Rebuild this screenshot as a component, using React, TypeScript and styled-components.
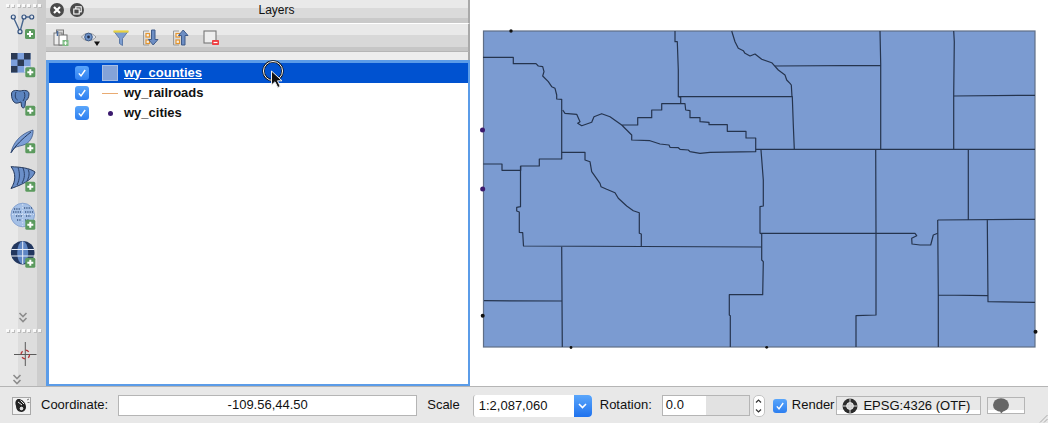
import styled, { createGlobalStyle } from "styled-components";
import { ReactNode } from "react";

const GlobalStyle = createGlobalStyle`
  html, body { margin: 0; padding: 0; background: #e8e8e8; overflow: hidden; }
  body { font-family: "Liberation Sans", Arial, sans-serif; }
`;

// county boundaries, traced in page coordinates
const counties = [
  "M483 57.3H513.3V63.7H536L538.3 66L542.7 66.7L544 71.7L542.7 76L548.3 81.7L551.7 86.7L555 88.3L556.7 95V99L561.7 99.3V159H539.3V166H520.7V170.3H502V164H483.3",
  "M561.7 152.3H585V160L590 161.7L591.7 171.7L600 183.3L601 186.7L606.7 189.3L615 192.7L618.3 198.3L626.7 206L633.3 210.7L639.3 212.7V233.3L641.3 234V246.7",
  "M520.5 166V206.7L516.7 207.3V211L519.3 212V232.3L522.7 232.7L523.5 246L761.7 247",
  "M561.7 246.7L562.3 347M484 300.7L562.3 301",
  "M761 150L763.3 180V206L760 206.7V233.3L761.7 234V260L763.3 261.7L762.7 294.7H729.3V315L730.3 315.7V347",
  "M562.7 110L565 113.3L576.7 114.3L580 121.7L577.7 123.3L581.7 125.7L591.7 122.3L594 116.7L601.7 113.7L610 116.7L621.7 125L631.7 135V140L650 140.7L660 144L669 145L670 147.3L678.3 147.7L680 149.3L688.3 150L690 151.7L700 153.3L710 152.3L755.7 151.7V138H746V131.3H727.3V124.7H709V122.3L700 121.7V117.7H690V110.7L685.7 110L685 103.7H661.7V110H651.7V117.7H637.7V125H621.7",
  "M675 31V41.7H677.3L678.3 70V96.7L680.7 97.3V103.7M678.3 96.7H792.3L793.3 125L794.3 149.3",
  "M731.7 31L735 41.7L738.3 48.3L743.3 50.7L745 53.3L750 56L755 54L761.7 59.3L771.7 62.7L778.3 70L785 75L786.7 80L790 83.3L791.3 85L792 96.7",
  "M775 66L880.5 65.3M880 31L880.7 63.3V149.3M953.7 31L954.3 41.7L953.7 96V149.3M953.7 96L1035 95.3M756 149.3H1035",
  "M875.7 150L876 233.3V315L856 315.7V347M968.3 150V219.3M937.7 220L1035 219.3M937.7 220L938.3 295V347M987.3 220L988 301.7L1035 302.3M938.3 295L987.7 295.7",
  "M760 233.3H915L916.7 235.7L911.7 238.3L912 244L920 245H930.7L933.3 235L937.7 233.3",
];

const mapDots = [
  { x: 511, y: 31, r: 1.7, c: "#111" },
  { x: 482.5, y: 130, r: 2.5, c: "#3b1a6e" },
  { x: 482.7, y: 189, r: 2.5, c: "#3b1a6e" },
  { x: 482.7, y: 315.7, r: 2, c: "#111" },
  { x: 571, y: 347.5, r: 1.4, c: "#111" },
  { x: 766.7, y: 347.3, r: 1.4, c: "#111" },
  { x: 1035.5, y: 331.7, r: 2, c: "#111" },
];

const layers = [
  { name: "wy_counties", kind: "fill", selected: true },
  { name: "wy_railroads", kind: "line", selected: false },
  { name: "wy_cities", kind: "point", selected: false },
];

function Badge({ x, y }: { x: number; y: number }) {
  return (
    <g>
      <rect x={x - 5} y={y - 5} width="10" height="10" rx="1.5" fill="#5b9a5e" />
      <path d={`M${x - 3} ${y}H${x + 3}M${x} ${y - 3}V${y + 3}`} stroke="#fff" strokeWidth="2" />
    </g>
  );
}

function SideIcon({ top, children }: { top: number; children: ReactNode }) {
  return (
    <SideSvg viewBox={`0 ${top} 46 39`}>{children}</SideSvg>
  );
}

function Grip() {
  return (
    <GripRow>
      {Array.from({ length: 7 }).map((_, i) => (
        <GripDot key={i} />
      ))}
    </GripRow>
  );
}

function Chevrons() {
  return (
    <svg width="10" height="11" viewBox="0 0 10 11">
      <path d="M1.5 1L5 4.5L8.5 1M1.5 6L5 9.5L8.5 6" fill="none" stroke="#8d8d8d" strokeWidth="1.6" />
    </svg>
  );
}

function LeftToolbar() {
  return (
    <LeftBar>
      <Grip />
      <SideIcon top={5}>
        <path d="M13.3 17L20 31.7L24 17H31.7" fill="none" stroke="#48668f" strokeWidth="1.4" />
        {[[13.3, 17], [20, 31.7], [24, 17], [31.7, 17]].map(([x, y]) => (
          <circle key={x} cx={x} cy={y} r="2" fill="#dfe6f0" stroke="#34527e" strokeWidth="1.2" />
        ))}
        <Badge x={30} y={34} />
      </SideIcon>
      <SideIcon top={44}>
        <rect x="11" y="53" width="19.6" height="19.6" fill="#7c9fdc" />
        <path d="M11 53h6.5v6.5h-6.5zM24 53h6.5v6.5h-6.5zM17.5 59.5h6.5v6.5h-6.5zM11 66h6.5v6.5h-6.5z" fill="#2b3a55" />
        <rect x="24" y="66" width="6.5" height="6.5" fill="#c3d3ee" />
        <Badge x={30.3} y={72.3} />
      </SideIcon>
      <SideIcon top={83}>
        <path d="M11.5 94C11.5 90 16 90 20 91C24 90 29 90 29 94C29 98 27 100 25.5 101L25 106C24.5 108.5 22 108.5 21.5 106L21 102C18 103 16 104 14 102C12 100 11.5 97 11.5 94Z" fill="#5c84bf" stroke="#24385c" strokeWidth="1" />
        <path d="M16 92C14.5 96 15.5 99 17.5 100M24 92C25.5 95 25 98 23 101" fill="none" stroke="#24385c" strokeWidth="0.9" />
        <Badge x={30.3} y={110.7} />
      </SideIcon>
      <SideIcon top={122}>
        <path d="M11 152.7C13 143 20 134 33 130C33.5 135 31 141 26 144C22 146 17 146 14.5 148Z" fill="#7c9fd6" stroke="#3a5685" strokeWidth="0.8" />
        <path d="M11 152.7C16 145 22 139 31 132" fill="none" stroke="#24385c" strokeWidth="1" />
        <Badge x={30.3} y={148.3} />
      </SideIcon>
      <SideIcon top={161}>
        <path d="M11 166.7C20 167 30 168 35 172C33 178 27 183 11 188.5C16 181 16 173 11 166.7Z" fill="#6b8fc9" stroke="#22375c" strokeWidth="1" />
        <path d="M18 167.5C20 173 20 179 17 185M23 168C25 173 25 178 22 183M28 169.5C30 173 29 177 27 181" fill="none" stroke="#22375c" strokeWidth="0.9" />
        <Badge x={30.3} y={186.7} />
      </SideIcon>
      <SideIcon top={200}>
        <circle cx="22.7" cy="215" r="11.8" fill="#a5c0e6" stroke="#7c9bcb" strokeWidth="0.8" />
        <path d="M14 209H20M24 208H32M13 212H21M25 212H33M16 216H22M26 216H31M17 220H21M25 220H29" stroke="#3f5a86" strokeWidth="1.6" strokeDasharray="1.2 1.1" />
        <path d="M12 214.5H34M22.7 204V226" stroke="#e6eef9" strokeWidth="0.7" strokeDasharray="1.5 1.5" />
        <Badge x={30.3} y={224.7} />
      </SideIcon>
      <SideIcon top={239}>
        <circle cx="22.7" cy="252.7" r="11.8" fill="#22375f" />
        <ellipse cx="22.7" cy="252.7" rx="5.5" ry="11.5" fill="#5f86c4" />
        <path d="M11.5 249.5H34M11.5 256H34M22.7 241.5V264" stroke="#e8eef8" strokeWidth="1" />
        <Badge x={30.3} y={262.7} />
      </SideIcon>
      <Spacer />
      <ChevronSlot>
        <Chevrons />
      </ChevronSlot>
      <Grip />
      <Crosshair viewBox="0 0 46 26">
        <path d="M25.3 0V24M14 12.5H36.5" stroke="#5a5a5a" strokeWidth="1" />
        <circle cx="25.3" cy="12.5" r="4.3" fill="none" stroke="#b5383a" strokeWidth="1.3" strokeDasharray="3.5 3.2" />
      </Crosshair>
      <BottomChevron>
        <Chevrons />
      </BottomChevron>
    </LeftBar>
  );
}

function DockTools() {
  return (
    <DockToolbar>
      <ToolButton>
        <svg width="20" height="20" viewBox="0 0 20 20">
          <rect x="5.5" y="2" width="7" height="12" fill="#d8d8d8" stroke="#7b7b7b" />
          <rect x="3" y="5" width="8" height="12" fill="#eee" stroke="#7b7b7b" />
          <rect x="8" y="7" width="8" height="10" fill="#fff" stroke="#6e6e6e" />
          <rect x="11.5" y="12" width="6" height="6" fill="#7dbb83" />
          <path d="M14.5 13.2V17M12.7 15H16.3" stroke="#fff" strokeWidth="1.2" />
          <path d="M6.5 3V8" stroke="#4b6d9f" strokeWidth="1.6" />
        </svg>
      </ToolButton>
      <ToolButton>
        <svg width="20" height="20" viewBox="0 0 20 20">
          <path d="M0.5 9C4 4 11 4 15 9C11 14 4 14 0.5 9Z" fill="#dfe3ea" stroke="#9a9a9a" />
          <circle cx="7.5" cy="9" r="3.8" fill="#6f93c8" stroke="#3e5b89" />
          <circle cx="7.5" cy="9" r="1.4" fill="#20304f" />
          <path d="M13 13.5H19L16 18Z" fill="#111" />
        </svg>
      </ToolButton>
      <ToolButton>
        <svg width="20" height="20" viewBox="0 0 20 20">
          <path d="M3 3.5H17L11.5 10.5V17.5L8.5 15.5V10.5Z" fill="#7c9dd0" stroke="#5c7aa8" strokeLinejoin="round" />
          <path d="M2.5 3.5H17.5" stroke="#e8d23e" strokeWidth="2.2" />
        </svg>
      </ToolButton>
      <ToolButton>
        <svg width="20" height="20" viewBox="0 0 20 20">
          <path d="M2.5 3H8M2.5 3V17M2.5 17H8" fill="none" stroke="#9a9a9a" />
          <rect x="5" y="5.5" width="3.5" height="3.5" fill="#f0f0f0" stroke="#e5962f" strokeWidth="1.2" />
          <rect x="5" y="12" width="3.5" height="3.5" fill="#f0f0f0" stroke="#e5962f" strokeWidth="1.2" />
          <path d="M10.5 2H14V11.5H17L12.2 17L7.5 11.5H10.5Z" fill="#6d8ec4" stroke="#3f5b89" />
        </svg>
      </ToolButton>
      <ToolButton>
        <svg width="20" height="20" viewBox="0 0 20 20">
          <path d="M2.5 3H8M2.5 3V17M2.5 17H8" fill="none" stroke="#9a9a9a" />
          <rect x="5" y="5.5" width="3.5" height="3.5" fill="#f0f0f0" stroke="#e5962f" strokeWidth="1.2" />
          <rect x="5" y="12" width="3.5" height="3.5" fill="#f0f0f0" stroke="#e5962f" strokeWidth="1.2" />
          <path d="M10.5 17H14V7.5H17L12.2 2L7.5 7.5H10.5Z" fill="#6d8ec4" stroke="#3f5b89" />
        </svg>
      </ToolButton>
      <ToolButton>
        <svg width="20" height="20" viewBox="0 0 20 20">
          <rect x="3" y="3" width="12" height="12" fill="#eee" stroke="#777" strokeWidth="1.1" />
          <rect x="11" y="12" width="7" height="5" rx="0.8" fill="#ee3f43" />
          <path d="M12.5 14.5H16.5" stroke="#fff" strokeWidth="1.2" />
        </svg>
      </ToolButton>
    </DockToolbar>
  );
}

function CheckMark({ size }: { size: number }) {
  return (
    <CheckBox $size={size}>
      <svg width={size - 4} height={size - 4} viewBox="0 0 10 10">
        <path d="M1.8 5.4L4 7.8L8.2 2" fill="none" stroke="#fff" strokeWidth="1.4" />
      </svg>
    </CheckBox>
  );
}

function LayerPanel() {
  return (
    <Dock>
      <TitleBar>
        <TitleButtons>
          <RoundButton>
            <svg width="8" height="8" viewBox="0 0 8 8">
              <path d="M1 1L7 7M7 1L1 7" stroke="#fff" strokeWidth="2.2" />
            </svg>
          </RoundButton>
          <RoundButton>
            <svg width="9" height="9" viewBox="0 0 9 9">
              <rect x="2.8" y="0.8" width="5.4" height="5" fill="none" stroke="#fff" strokeWidth="1.1" />
              <rect x="0.8" y="3" width="5.4" height="5" fill="#4a4a4a" stroke="#fff" strokeWidth="1.1" />
            </svg>
          </RoundButton>
        </TitleButtons>
        <TitleText>Layers</TitleText>
      </TitleBar>
      <DockTools />
      <DockGap />
      <LayerList>
        {layers.map((l) => (
          <LayerRow key={l.name} $selected={l.selected}>
            <CheckMark size={14} />
            <SymbolCell>
              {l.kind === "fill" && <FillSwatch />}
              {l.kind === "line" && <LineSwatch />}
              {l.kind === "point" && <PointSwatch />}
            </SymbolCell>
            <LayerName $selected={l.selected}>{l.name}</LayerName>
          </LayerRow>
        ))}
        <CursorMark viewBox="0 0 26 32">
          <circle cx="11" cy="11" r="9.5" fill="none" stroke="#111" strokeWidth="2.4" />
          <circle cx="11" cy="11" r="9.5" fill="none" stroke="#fff" strokeWidth="1" />
          <path d="M9.5 11V25L13 21.8L15.8 27.5L18.2 26.4L15.5 20.8H20Z" fill="#111" stroke="#eee" strokeWidth="1" />
        </CursorMark>
      </LayerList>
    </Dock>
  );
}

function MapView() {
  return (
    <MapCanvas>
      <svg width="578" height="385" viewBox="470 0 578 385">
        <rect x="483.5" y="31" width="551.5" height="316" fill="#7b9bd1" stroke="#5f6e86" strokeWidth="1.2" />
        {counties.map((d, i) => (
          <path key={i} d={d} fill="none" stroke="#25344e" strokeWidth="1.2" strokeLinejoin="round" />
        ))}
        {mapDots.map((p) => (
          <circle key={p.x} cx={p.x} cy={p.y} r={p.r} fill={p.c} />
        ))}
      </svg>
    </MapCanvas>
  );
}

function Status() {
  return (
    <StatusBar>
      <MouseToggle>
        <svg width="17" height="15" viewBox="0 0 17 15">
          <path d="M4 1.5C7 0 11 3 12.5 6.5C14 10 12 14 8.5 14C5 14 3 11 3 8C2 6 2 3 4 1.5Z" fill="#222" />
          <circle cx="8.5" cy="10.5" r="2.3" fill="#ddd" stroke="#222" />
          <path d="M5 4L9 7M7.5 2.5L11 6" stroke="#eee" strokeWidth="1" />
          <path d="M14 2L16 1M14.5 4.5H16.5" stroke="#555" strokeWidth="0.8" />
        </svg>
      </MouseToggle>
      <CoordLabel>Coordinate:</CoordLabel>
      <CoordField>-109.56,44.50</CoordField>
      <ScaleLabel>Scale</ScaleLabel>
      <ScaleCombo>
        <ScaleValue>1:2,087,060</ScaleValue>
        <ScaleArrow>
          <svg width="9" height="6" viewBox="0 0 9 6">
            <path d="M1 1L4.5 4.5L8 1" fill="none" stroke="#fff" strokeWidth="1.6" />
          </svg>
        </ScaleArrow>
      </ScaleCombo>
      <RotationLabel>Rotation:</RotationLabel>
      <RotationField>
        <RotationValue>0.0</RotationValue>
        <RotationRest />
      </RotationField>
      <Stepper>
        <svg width="7" height="18" viewBox="0 0 7 18">
          <path d="M1 5.5L3.5 3L6 5.5M1 12.5L3.5 15L6 12.5" fill="none" stroke="#333" strokeWidth="1.2" />
        </svg>
      </Stepper>
      <RenderCheck>
        <CheckMark size={14} />
      </RenderCheck>
      <RenderLabel>Render</RenderLabel>
      <CrsBox>
        <svg width="16" height="16" viewBox="0 0 16 16">
          <circle cx="8" cy="8" r="7.5" fill="#2c2c2c" />
          <circle cx="8" cy="8" r="3.4" fill="#c9c9c9" stroke="#eee" />
          <path d="M8 0.5V15.5M0.5 8H15.5" stroke="#ddd" strokeWidth="1" />
        </svg>
        <CrsText>EPSG:4326 (OTF)</CrsText>
      </CrsBox>
      <MessageBox>
        <svg width="18" height="16" viewBox="0 0 18 16">
          <ellipse cx="9" cy="7" rx="8" ry="6.8" fill="#666" />
          <path d="M8 12L9 16L12 12Z" fill="#666" />
        </svg>
      </MessageBox>
      <SizeGrip width="10" height="10" viewBox="0 0 10 10">
        <path d="M9.5 2L2 9.5M9.5 6L6 9.5" stroke="#aaa" strokeWidth="1" />
      </SizeGrip>
    </StatusBar>
  );
}

export default function App() {
  return (
    <>
      <GlobalStyle />
      <Window>
        <Main>
          <LeftToolbar />
          <LayerPanel />
          <MapView />
        </Main>
        <Status />
      </Window>
    </>
  );
}

const Window = styled.div`
  width: 1048px;
  height: 423px;
  display: flex;
  flex-direction: column;
  overflow: hidden;
  background: #e8e8e8;
  color: #111;
`;

const Main = styled.div`
  height: 386px;
  display: flex;
  flex-shrink: 0;
`;

const LeftBar = styled.div`
  width: 46px;
  flex-shrink: 0;
  display: flex;
  flex-direction: column;
  background: linear-gradient(
    to right,
    #e9e9e9 0 18px,
    #dddddd 18px 37px,
    #cdcdcd 37px 46px
  );
`;

const GripRow = styled.div`
  height: 5px;
  display: flex;
  flex-shrink: 0;
  align-items: center;
  justify-content: space-between;
  padding: 0 5px 0 6px;
  margin-top: 3px;
`;

const GripDot = styled.span`
  width: 3px;
  height: 3px;
  background: #fafafa;
  box-shadow: 1px 1px 0 #bdbdbd;
`;

const SideSvg = styled.svg`
  display: block;
  width: 46px;
  height: 39px;
  flex-shrink: 0;
  margin-top: -3px;
  margin-bottom: 3px;
`;

const Spacer = styled.div`
  flex: 1;
`;

const ChevronSlot = styled.div`
  height: 12px;
  display: flex;
  justify-content: center;
  padding-bottom: 1px;
`;

const BottomChevron = styled.div`
  height: 12px;
  display: flex;
  padding-left: 12px;
  margin: 6px 0 0;
`;

const Crosshair = styled.svg`
  display: block;
  width: 46px;
  height: 26px;
  margin-top: 9px;
`;

const Dock = styled.div`
  width: 424px;
  flex-shrink: 0;
  display: flex;
  flex-direction: column;
`;

const TitleBar = styled.div`
  height: 23px;
  display: flex;
  align-items: flex-start;
  border-right: 2px solid #a9a9a9;
  border-bottom: 1px solid #fff;
  background: linear-gradient(
    to bottom,
    #e9e9e9 0 8px,
    #dadada 8px 18px,
    #c9c9c9 18px 23px
  );
`;

const TitleButtons = styled.div`
  width: 39px;
  display: flex;
  gap: 6px;
  padding: 3px 0 0 4px;
  box-sizing: border-box;
`;

const RoundButton = styled.div`
  width: 14px;
  height: 14px;
  border-radius: 50%;
  background: #4a4a4a;
  display: flex;
  align-items: center;
  justify-content: center;
`;

const TitleText = styled.div`
  flex: 1;
  text-align: center;
  font-size: 12px;
  line-height: 20px;
`;

const DockToolbar = styled.div`
  height: 27px;
  display: flex;
  align-items: center;
  padding-top: 1px;
  box-sizing: border-box;
  border-right: 2px solid #a9a9a9;
  background: linear-gradient(
    to bottom,
    #e9e9e9 0 11px,
    #d8d8d8 11px 23px,
    #c6c6c6 23px 27px
  );
`;

const ToolButton = styled.div`
  width: 30px;
  display: flex;
  justify-content: center;
`;

const DockGap = styled.div`
  height: 9px;
  background: #ededed;
  border-right: 2px solid #a9a9a9;
  border-top: 1px solid #b5b5b5;
  box-sizing: border-box;
`;

const LayerList = styled.div`
  position: relative;
  flex: 1;
  background: #fff;
  border: 3px solid #5b9ce8;
  border-right-width: 2px;
  border-bottom-width: 2px;
`;

const LayerRow = styled.div<{ $selected: boolean }>`
  height: 20px;
  display: flex;
  align-items: center;
  padding-left: 26px;
  background: ${(p) => (p.$selected ? "#0052d0" : "transparent")};
`;

const CheckBox = styled.div<{ $size: number }>`
  width: ${(p) => p.$size}px;
  height: ${(p) => p.$size}px;
  border-radius: 3px;
  background: linear-gradient(#5aa6fb, #2d7ff0);
  display: flex;
  align-items: center;
  justify-content: center;
  flex-shrink: 0;
`;

const SymbolCell = styled.div`
  width: 16px;
  height: 16px;
  margin: 0 6px 0 13px;
  display: flex;
  align-items: center;
  justify-content: center;
`;

const FillSwatch = styled.div`
  width: 14px;
  height: 14px;
  background: #84a3d8;
  border: 1px solid #a9bfe3;
`;

const LineSwatch = styled.div`
  width: 16px;
  height: 1px;
  background: #e9ab72;
`;

const PointSwatch = styled.div`
  width: 5px;
  height: 5px;
  border-radius: 50%;
  background: #3b1a6e;
`;

const LayerName = styled.span<{ $selected: boolean }>`
  font-size: 13px;
  font-weight: 700;
  margin-top: -2px;
  color: ${(p) => (p.$selected ? "#fff" : "#111")};
  text-decoration: ${(p) => (p.$selected ? "underline" : "none")};
`;

const CursorMark = styled.svg`
  position: absolute;
  left: 213px;
  top: -3px;
  width: 26px;
  height: 32px;
`;

const MapCanvas = styled.div`
  flex: 1;
  background: #fff;
  height: 386px;

  > svg {
    display: block;
  }
`;

const StatusBar = styled.div`
  flex: 1;
  position: relative;
  display: flex;
  align-items: center;
  padding: 1px 0 0 12px;
  box-sizing: border-box;
  border-top: 1px solid #b5b5b5;
  font-size: 13px;
  background: #e8e8e8;
`;

const MouseToggle = styled.div`
  width: 19px;
  height: 18px;
  box-sizing: border-box;
  border: 1px solid #a8a8a8;
  background: #f2f2f2;
  display: flex;
  align-items: center;
  justify-content: center;
`;

const CoordLabel = styled.span`
  margin: 0 0 2px 10px;
`;

const CoordField = styled.div`
  width: 299px;
  height: 21px;
  margin-left: 10px;
  box-sizing: border-box;
  border: 1px solid #b5b5b5;
  background: #fff;
  text-align: center;
  line-height: 18px;
`;

const ScaleLabel = styled.span`
  margin: 0 0 2px 10px;
`;

const ScaleCombo = styled.div`
  width: 119px;
  height: 22px;
  margin-left: 13px;
  box-sizing: border-box;
  display: flex;
  background: #fff;
  border-left: 1px solid #b5b5b5;
  border-radius: 3px;
`;

const ScaleValue = styled.div`
  flex: 1;
  padding-left: 5px;
  line-height: 21px;
`;

const ScaleArrow = styled.div`
  width: 18px;
  border-radius: 0 4px 4px 0;
  background: linear-gradient(#5aa6fb, #1f72ee);
  display: flex;
  align-items: center;
  justify-content: center;
`;

const RotationLabel = styled.span`
  margin: 0 0 2px 8px;
`;

const RotationField = styled.div`
  width: 88px;
  height: 21px;
  margin-left: 10px;
  box-sizing: border-box;
  display: flex;
  border: 1px solid #b5b5b5;
  background: #fff;
`;

const RotationValue = styled.div`
  width: 43px;
  padding-left: 3px;
  box-sizing: border-box;
  line-height: 18px;
`;

const RotationRest = styled.div`
  flex: 1;
  background: #e2e2e2;
`;

const Stepper = styled.div`
  width: 12px;
  height: 22px;
  margin-left: 3px;
  box-sizing: border-box;
  border: 1px solid #c4c4c4;
  border-radius: 5px;
  background: #fff;
  display: flex;
  align-items: center;
  justify-content: center;
`;

const RenderCheck = styled.div`
  margin-left: 8px;
`;

const RenderLabel = styled.span`
  margin: 0 0 2px 5px;
`;

const CrsBox = styled.div`
  width: 145px;
  height: 19px;
  margin-left: 2px;
  box-sizing: border-box;
  display: flex;
  align-items: center;
  gap: 5px;
  padding-left: 5px;
  border: 1px solid #b5b5b5;
  background: linear-gradient(to bottom, #e8e8e8 0 13px, #fff 13px);
`;

const CrsText = styled.span`
  white-space: nowrap;
`;

const MessageBox = styled.div`
  width: 38px;
  height: 17px;
  margin-left: 6px;
  box-sizing: border-box;
  border: 1px solid #b5b5b5;
  background: linear-gradient(to bottom, #e8e8e8 0 12px, #fff 12px);
  display: flex;
  align-items: flex-start;
  padding-left: 4px;
  overflow: hidden;
`;

const SizeGrip = styled.svg`
  position: absolute;
  right: 0;
  bottom: 0;
  width: 10px;
  height: 10px;
`;
